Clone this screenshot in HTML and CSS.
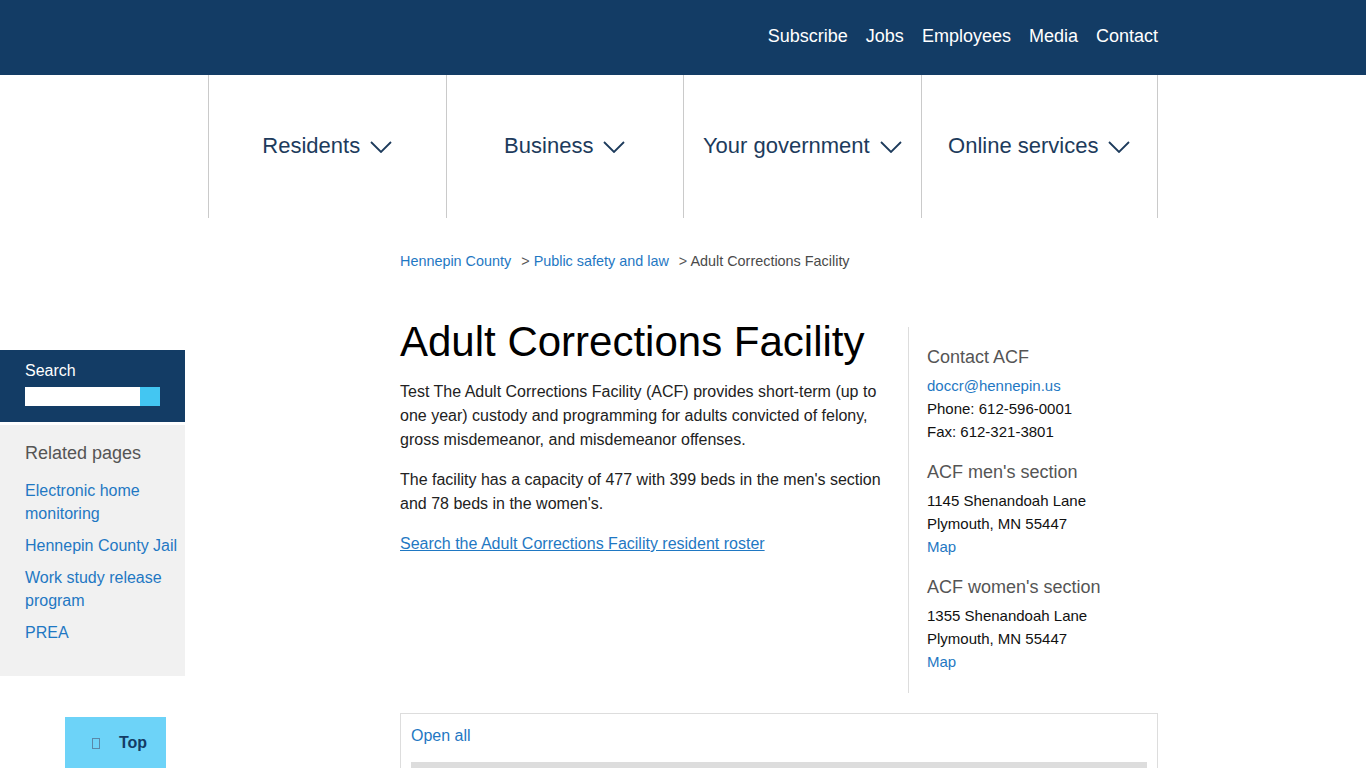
FILE: index.html
```html
<!DOCTYPE html>
<html lang="en">
<head>
<meta charset="utf-8">
<title>Adult Corrections Facility</title>
<link rel="stylesheet" href="styles.css">
</head>
<body>
<header class="topbar">
  <nav class="topbar-inner">
    <a href="#">Subscribe</a>
    <a href="#">Jobs</a>
    <a href="#">Employees</a>
    <a href="#">Media</a>
    <a href="#">Contact</a>
  </nav>
</header>
<nav class="mainnav">
  <div class="mainnav-inner">
    <a class="nav-item" href="#">Residents <svg class="chev" width="22" height="12" viewBox="0 0 22 12"><path d="M1 1 L11 11 L21 1" fill="none" stroke="#1d3b5c" stroke-width="1.8"/></svg></a>
    <a class="nav-item" href="#">Business <svg class="chev" width="22" height="12" viewBox="0 0 22 12"><path d="M1 1 L11 11 L21 1" fill="none" stroke="#1d3b5c" stroke-width="1.8"/></svg></a>
    <a class="nav-item" href="#">Your government <svg class="chev" width="22" height="12" viewBox="0 0 22 12"><path d="M1 1 L11 11 L21 1" fill="none" stroke="#1d3b5c" stroke-width="1.8"/></svg></a>
    <a class="nav-item last" href="#">Online services <svg class="chev" width="22" height="12" viewBox="0 0 22 12"><path d="M1 1 L11 11 L21 1" fill="none" stroke="#1d3b5c" stroke-width="1.8"/></svg></a>
  </div>
</nav>
<div class="page">
  <aside class="leftside">
    <div class="searchbox">
      <div class="search-label">Search</div>
      <div class="search-row"><span class="search-input"></span><span class="search-btn"></span></div>
    </div>
    <div class="related">
      <h2 class="related-title">Related pages</h2>
      <ul class="related-list">
        <li><a href="#">Electronic home monitoring</a></li>
        <li><a href="#">Hennepin County Jail</a></li>
        <li><a href="#">Work study release program</a></li>
        <li><a href="#">PREA</a></li>
      </ul>
    </div>
    <a class="topbtn" href="#"><span class="tofu"></span>Top</a>
  </aside>
  <main class="main">
    <div class="breadcrumb">
      <a href="#">Hennepin County</a><span class="sep">&gt; </span><a href="#">Public safety and law</a><span class="sep">&gt; </span><span class="current">Adult Corrections Facility</span>
    </div>
    <div class="content-grid">
      <div class="article">
        <h1>Adult Corrections Facility</h1>
        <p>Test The Adult Corrections Facility (ACF) provides short-term (up to one year) custody and programming for adults convicted of felony, gross misdemeanor, and misdemeanor offenses.</p>
        <p>The facility has a capacity of 477 with 399 beds in the men's section and 78 beds in the women's.</p>
        <p><a class="ulink" href="#">Search the Adult Corrections Facility resident roster</a></p>
      </div>
      <aside class="contact">
        <section class="csec">
          <h3>Contact ACF</h3>
          <a href="#">doccr@hennepin.us</a><br>
          Phone: 612-596-0001<br>
          Fax: 612-321-3801
        </section>
        <section class="csec">
          <h3>ACF men's section</h3>
          1145 Shenandoah Lane<br>
          Plymouth, MN 55447<br>
          <a href="#">Map</a>
        </section>
        <section class="csec">
          <h3>ACF women's section</h3>
          1355 Shenandoah Lane<br>
          Plymouth, MN 55447<br>
          <a href="#">Map</a>
        </section>
      </aside>
    </div>
    <div class="accordion">
      <a class="openall" href="#">Open all</a>
      <div class="acc-bar"></div>
    </div>
  </main>
</div>
</body>
</html>
```
FILE: styles.css
```css
* { box-sizing: border-box; }
html, body { margin: 0; padding: 0; }
body {
  font-family: "Liberation Sans", Arial, sans-serif;
  color: #222;
  background: #fff;
  overflow: hidden;
}
a { color: #1f78c3; text-decoration: none; }

.topbar { background: #133c65; height: 75px; }
.topbar-inner {
  width: 950px;
  margin: 0 auto;
  height: 75px;
  display: flex;
  justify-content: flex-end;
  align-items: center;
  gap: 18px;
  padding-bottom: 3px;
}
.topbar-inner a { color: #fff; font-size: 18px; }

.mainnav-inner {
  width: 950px;
  margin: 0 auto;
  display: grid;
  grid-template-columns: repeat(4, 1fr);
  height: 143px;
}
.nav-item {
  display: flex;
  align-items: center;
  justify-content: center;
  gap: 10px;
  border-left: 1px solid #cacaca;
  color: #1d3b5c;
  font-size: 22px;
  padding-bottom: 1px;
}
.nav-item.last { border-right: 1px solid #cacaca; }
.chev { display: block; margin-top: 1px; }

.page { display: flex; align-items: flex-start; }

.leftside { width: 185px; flex: none; margin-top: 132px; }
.searchbox {
  background: #133c65;
  padding: 11px 25px 16px;
}
.search-label { color: #fff; font-size: 16px; line-height: 20px; margin-bottom: 6px; }
.search-row { display: flex; height: 19px; }
.search-input { width: 115px; background: #fff; }
.search-btn { width: 20px; background: #43c6f2; }

.related {
  margin-top: 3px;
  background: #f1f1f1;
  padding: 17px 4px 32px 25px;
}
.related-title {
  margin: 0 0 15px;
  font-size: 18px;
  line-height: 22px;
  font-weight: normal;
  color: #555;
}
.related-list { list-style: none; margin: 0; padding: 0; }
.related-list li { font-size: 16px; line-height: 23px; margin-bottom: 9px; }
.related-list li:last-child { margin-bottom: 0; }

.topbtn {
  display: flex;
  align-items: center;
  justify-content: center;
  gap: 19px;
  margin: 41px 0 0 65px;
  width: 101px;
  height: 52px;
  background: #6dd3f8;
  color: #133c65;
  font-weight: bold;
  font-size: 16px;
  padding-left: 8px;
}
.tofu {
  display: inline-block;
  width: 8px;
  height: 11px;
  border: 1px solid #5a88a8;
}

.main { width: 758px; flex: none; margin-left: 215px; padding-top: 33px; }
.breadcrumb { font-size: 14.4px; line-height: 20px; color: #555; }
.breadcrumb a { margin-right: 10px; }
.breadcrumb .current { color: #4a4a4a; }

.content-grid {
  margin-top: 48px;
  display: grid;
  grid-template-columns: 490px 250px;
  column-gap: 18px;
  align-items: start;
}
.article h1 {
  margin: 0 0 15px;
  font-size: 42px;
  line-height: 46px;
  font-weight: normal;
  color: #000;
}
.article p { margin: 0 0 16px; font-size: 16px; line-height: 24px; color: #222; }
.ulink { text-decoration: underline; }

.contact {
  margin-top: 8px;
  border-left: 1px solid #ddd;
  padding: 19px 0 20px 18px;
  font-size: 15px;
  line-height: 23px;
  color: #111;
}
.csec { margin-bottom: 18px; }
.csec:last-child { margin-bottom: 0; }
.csec h3 {
  margin: 0 0 6px;
  font-size: 18px;
  line-height: 22px;
  font-weight: normal;
  color: #555;
}

.accordion {
  margin-top: 20px;
  border: 1px solid #ddd;
  padding: 12px 10px 20px;
}
.openall { display: block; font-size: 16px; line-height: 20px; }
.acc-bar { margin-top: 16px; height: 40px; background: #ddd; }
```
